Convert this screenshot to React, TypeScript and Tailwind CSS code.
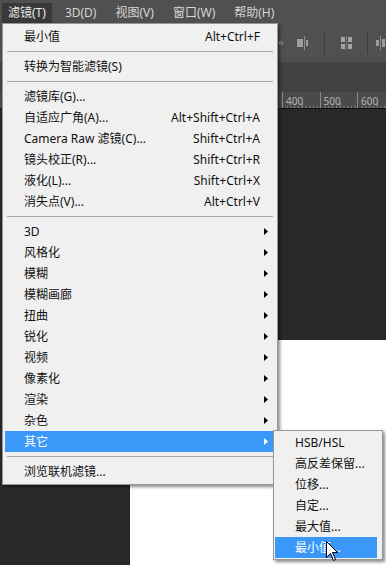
import React from 'react'

// Photoshop filter menu, opened on 其它 > 最小值
type Item =
  | { kind: 'sep' }
  | { kind: 'item'; label: string; keys?: string; sub?: boolean; active?: boolean }

const MENU: Item[] = [
  { kind: 'item', label: '最小值', keys: 'Alt+Ctrl+F' },
  { kind: 'sep' },
  { kind: 'item', label: '转换为智能滤镜(S)' },
  { kind: 'sep' },
  { kind: 'item', label: '滤镜库(G)...' },
  { kind: 'item', label: '自适应广角(A)...', keys: 'Alt+Shift+Ctrl+A' },
  { kind: 'item', label: 'Camera Raw 滤镜(C)...', keys: 'Shift+Ctrl+A' },
  { kind: 'item', label: '镜头校正(R)...', keys: 'Shift+Ctrl+R' },
  { kind: 'item', label: '液化(L)...', keys: 'Shift+Ctrl+X' },
  { kind: 'item', label: '消失点(V)...', keys: 'Alt+Ctrl+V' },
  { kind: 'sep' },
  { kind: 'item', label: '3D', sub: true },
  { kind: 'item', label: '风格化', sub: true },
  { kind: 'item', label: '模糊', sub: true },
  { kind: 'item', label: '模糊画廊', sub: true },
  { kind: 'item', label: '扭曲', sub: true },
  { kind: 'item', label: '锐化', sub: true },
  { kind: 'item', label: '视频', sub: true },
  { kind: 'item', label: '像素化', sub: true },
  { kind: 'item', label: '渲染', sub: true },
  { kind: 'item', label: '杂色', sub: true },
  { kind: 'item', label: '其它', sub: true, active: true },
  { kind: 'sep' },
  { kind: 'item', label: '浏览联机滤镜...' },
]

const SUBMENU = ['HSB/HSL', '高反差保留...', '位移...', '自定...', '最大值...', '最小值...']

const TOP_MENU = ['滤镜(T)', '3D(D)', '视图(V)', '窗口(W)', '帮助(H)']

function Arrow({ light }: { light?: boolean }) {
  return (
    <svg width="4" height="7" viewBox="0 0 4 7">
      <path d="M0 0 L4 3.5 L0 7 Z" fill={light ? '#ffffff' : '#000000'} />
    </svg>
  )
}

function AlignIcon({ variant }: { variant: number }) {
  if (variant === 0) {
    return (
      <svg width="10" height="14" viewBox="0 0 10 14">
        <rect x="4" y="0" width="1" height="14" fill="#8c8c8c" />
        <rect x="0" y="4" width="3" height="6" fill="#9e9e9e" />
        <rect x="6" y="3" width="3" height="8" fill="#9e9e9e" />
      </svg>
    )
  }
  if (variant === 1) {
    return (
      <svg width="11" height="14" viewBox="0 0 11 14">
        <rect x="7" y="0" width="1" height="14" fill="#8c8c8c" />
        <rect x="0" y="3" width="6" height="8" fill="#9e9e9e" />
        <rect x="9" y="4" width="2" height="6" fill="#9e9e9e" />
      </svg>
    )
  }
  return (
    <svg width="11" height="14" viewBox="0 0 11 14">
      <rect x="0" y="1" width="4" height="5" fill="#a4a4a4" />
      <rect x="0" y="8" width="4" height="5" fill="#a4a4a4" />
      <rect x="5" y="0" width="1" height="14" fill="#7a7a7a" />
      <rect x="7" y="1" width="4" height="5" fill="#a4a4a4" />
      <rect x="7" y="8" width="4" height="5" fill="#a4a4a4" />
    </svg>
  )
}

function RulerTicks() {
  const ticks = []
  for (let i = 1; i < 10; i++) {
    const x = i * 3.75
    const h = i === 5 ? 5 : 2
    ticks.push(<rect key={i} x={x} y={16 - h} width="1" height={h} fill="#8a8a8a" />)
  }
  return (
    <svg width="37.5" height="16" viewBox="0 0 37.5 16" className="absolute left-0 top-0">
      {ticks}
    </svg>
  )
}

export default function App() {
  return (
    <div className="relative w-[386px] h-[565px] overflow-hidden flex flex-col bg-[#282828] font-['Noto_Sans','Noto_Sans_CJK_SC',sans-serif] text-[12px] leading-none">
      {/* Menu bar */}
      <div className="h-[23px] shrink-0 bg-[#505050] flex items-end pl-[2px] gap-[7px] text-[#d6d6d6]">
        {TOP_MENU.map((m, i) => (
          <div
            key={m}
            className={`h-[20px] px-[6px] flex items-center ${i === 0 ? 'bg-[#393939] text-[#e8e8e8]' : ''}`}
          >
            {m}
          </div>
        ))}
      </div>

      {/* Options bar */}
      <div className="h-[39px] shrink-0 bg-[#505050] flex items-center pl-[279px]">
        <AlignIcon variant={0} />
        <div className="ml-[14px]">
          <AlignIcon variant={1} />
        </div>
        <div className="ml-[16px] w-px h-[22px] bg-[#3c3c3c]" />
        <div className="ml-[16px]">
          <AlignIcon variant={2} />
        </div>
        <div className="ml-[15px] w-px h-[22px] bg-[#3c3c3c]" />
        <div className="ml-[9px]">
          <AlignIcon variant={0} />
        </div>
      </div>

      {/* Tab bar */}
      <div className="h-[30px] shrink-0 bg-[#424242]" />

      {/* Ruler */}
      <div className="h-[17px] shrink-0 bg-[#4a4a4a] border-b border-[#111] flex pl-[282px] text-[10px] text-[#b4b4b4]">
        {['400', '500', '600', ''].map((n, i) => (
          <div key={i} className="relative w-[37.5px] shrink-0 h-full border-l border-[#8a8a8a]">
            <RulerTicks />
            {n && <span className="absolute left-[3px] top-[4px]">{n}</span>}
          </div>
        ))}
      </div>

      {/* Canvas */}
      <div className="flex-1 flex flex-col pl-[130px] pt-[231px]">
        <div className="flex-1 bg-white" />
      </div>

      {/* Filter dropdown */}
      <div className="absolute left-[2px] top-[23px] w-[276px] bg-[#f0f0f0] border border-[#979797] p-[2px] shadow-[2px_2px_3px_rgba(0,0,0,0.45)] text-[#111]">
        {MENU.map((it, i) =>
          it.kind === 'sep' ? (
            <div key={i} className="h-[9px] flex items-center px-[2px]">
              <div className="h-px w-full bg-[#a8a8a8]" />
            </div>
          ) : (
            <div
              key={i}
              className={`h-[21px] flex items-center pl-[19px] ${it.active ? 'bg-[#3a98f8] text-white' : ''}`}
            >
              <span className="flex-1 whitespace-nowrap">{it.label}</span>
              {it.keys && <span className="whitespace-nowrap">{it.keys}</span>}
              <span className="w-[15px] shrink-0 pl-[4px] flex items-center">
                {it.sub && <Arrow light={it.active} />}
              </span>
            </div>
          )
        )}
      </div>

      {/* Submenu */}
      <div className="absolute left-[273px] top-[430px] w-[110px] bg-[#f0f0f0] border border-[#979797] p-px shadow-[2px_2px_3px_rgba(0,0,0,0.45)] text-[#111]">
        {SUBMENU.map((s, i) => (
          <div
            key={s}
            className={`h-[21px] flex items-center pl-[20px] mr-[4px] whitespace-nowrap ${i === SUBMENU.length - 1 ? 'bg-[#3a98f8] text-white' : ''}`}
          >
            {s}
          </div>
        ))}
      </div>

      {/* Mouse pointer */}
      <svg
        width="13"
        height="21"
        viewBox="0 0 13 21"
        className="absolute left-[326px] top-[541px]"
      >
        <path
          d="M0.5 0.5 L0.5 16.5 L4.5 12.5 L7.5 19.5 L9.5 18.5 L6.5 11.5 L11.5 11.5 Z"
          fill="#ffffff"
          stroke="#000000"
          strokeWidth="1"
          strokeLinejoin="miter"
        />
      </svg>
    </div>
  )
}
